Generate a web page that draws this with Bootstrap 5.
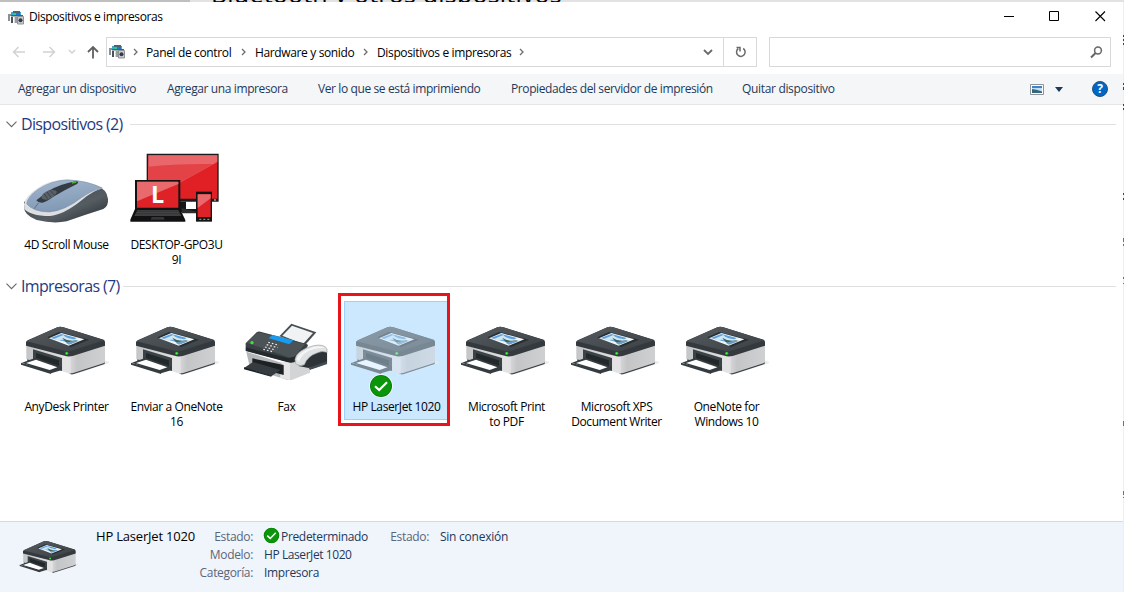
<!DOCTYPE html>
<html lang="es">
<head>
<meta charset="utf-8">
<title>Dispositivos e impresoras</title>
<meta name="viewport" content="width=device-width, initial-scale=1">
<link rel="stylesheet" href="https://cdn.jsdelivr.net/npm/bootstrap@5.3.0/dist/css/bootstrap.min.css">
<style>
html,body{height:100%}
body{font:12px/15px "Open Sans","Noto Sans",sans-serif;letter-spacing:-.39px;color:#000;background:#fff;overflow:hidden}
svg{display:block;flex:none}
.behind{height:2px;background:#e2e2e2;overflow:hidden}
.behind-tab{width:190px;height:2px;background:#bfbfbf}
.behind-text{font-size:25px;line-height:30px;margin:-22px 0 0 21px;letter-spacing:.2px;white-space:nowrap}
.titlebar{height:35px;padding-left:8px}
.win-btn{width:45.5px;height:29px}
.address{height:37px}
.field{height:30px;border:1px solid #d9d9d9}
.crumbs{width:618px;padding-left:2px;white-space:nowrap;letter-spacing:-.36px}
.refresh{width:34px;margin-left:-1px}
.search{width:342px;margin-left:12px}
.cmdbar{height:31px;background:#f5f6f7;border-bottom:1px solid #e4e6e8;color:#1e395b}
.cmdbar span{position:relative;white-space:nowrap;padding-bottom:1px}
.cmdbar .cmd{padding-left:18px}
.group-head{height:20px;font-size:16px;line-height:20px;color:#1f3a82;padding:0 8px 0 6px;letter-spacing:-.65px}
.group-head span{padding-bottom:1px}
.group-head hr{margin:0 0 0 7px;border-top:1px solid #e0e0e0;opacity:1}
.tiles{padding-left:11px}
.tile{width:110px;height:119px;text-align:center;white-space:nowrap;padding-left:1px}
.pic{height:98px;margin-left:-1px}
.pr{margin:23px 0 0 9px}
.chosen{background:#cce8ff;border:1px solid #99d1ff;width:104px;margin:0 3px;height:119px}
.chosen .pic{height:97px}
.chosen .pr{margin:22px 0 0 5px;opacity:.55}
.check-badge{left:24px;top:72px}
.frame{left:-7px;top:-9px;width:112px;height:133px;border:3px solid #e8141c}
.details{height:71px;background:#f0f4fb;border-top:1px solid #cfdbe6;color:#1e395b;line-height:18px;letter-spacing:-.33px}
.details .lbl{color:#5a6779;text-align:right;width:58px;margin-right:11px}
.model{font-size:13px;width:99px;margin:5px 0 0 17px;letter-spacing:-.2px}
.edge{width:1px;background:#eceef1}
</style>
</head>
<body class="d-flex flex-column position-relative">
<svg width="0" height="0" class="position-absolute">
<defs>
<linearGradient id="lid" x2="1" y2="1"><stop stop-color="#555b5f"/><stop offset="1" stop-color="#3a4044"/></linearGradient>
<linearGradient id="front" x2="1" y2="0"><stop stop-color="#c4c5c8"/><stop offset=".7" stop-color="#d8d9da"/><stop offset="1" stop-color="#e6e6e7"/></linearGradient>
<linearGradient id="side" x2="1" y2="0"><stop stop-color="#dcdcdd"/><stop offset=".25" stop-color="#c4c5c7"/><stop offset="1" stop-color="#cfd0d1"/></linearGradient>
<linearGradient id="blue" x2=".3" y2="1"><stop stop-color="#a3b7cf"/><stop offset="1" stop-color="#8199b5"/></linearGradient>
<linearGradient id="dark" x2="1" y2="1"><stop stop-color="#3d4449"/><stop offset=".6" stop-color="#555d63"/><stop offset="1" stop-color="#22282c"/></linearGradient>
<symbol id="printer" viewBox="30 42 270 162">
<path d="M190 194L296 160Q302 154 284 152Z" fill="#ececec"/>
<path d="M52 140L176 188Q182 196 192 192L284 162V155H52Z" fill="#3a4146"/>
<path d="M49 99L176 130V189L49 147Z" fill="url(#front)"/>
<path d="M174 129L285 99V153Q285 158 280 160L192 188Q180 192 174 187Z" fill="url(#side)"/>
<path d="M159 130H182V191Q170 190 159 184Z" fill="#e3e3e4"/>
<path d="M69 118L156 144V183L69 151Z" fill="#3c4347"/>
<path d="M78 129L147 151V170L78 146Z" fill="#23282b"/>
<path d="M36 158L77 143L156 171V180L123 190Z" fill="#353c40"/>
<path d="M48 159L78 149L142 172L119 180Z" fill="#fff"/>
<path d="M33 158L124 184L123 192L33 164Z" fill="#353c40"/>
<path d="M48 97Q48 94 53 91L142 52Q150 49 160 52L281 89Q285 91 285 97V107L188 138Q175 141 164 137L48 107Z" fill="#33393d"/>
<path d="M50 94L142 52Q150 49 160 52L283 91L184 122Q174 125 163 122Z" fill="url(#lid)"/>
<path d="M112 82L147 66L237 89L183 111Z" fill="#292e31"/>
<path d="M117 85L154 69L223 88L176 107Z" fill="#eef4f8"/>
<path d="M122 84L154 72L200 84L178 98Z" fill="#5c9fde"/>
<path d="M133 86L160 75Q167 86 211 91L194 98Q177 98 160 90Q153 87 145 92Z" fill="#cfe6f3"/>
<path d="M157 83Q177 97 204 90L182 101Q167 101 157 83Z" fill="#3f655c"/>
<path d="M167 98L191 92L205 94L177 104Z" fill="#6d9cc4"/>
<circle cx="170" cy="130" r="5" fill="#28b52b"/><circle cx="170" cy="130" r="2.5" fill="#5cf05e"/>
</symbol>
<symbol id="mouse" viewBox="60 105 270 150">
<path d="M72 200Q72 225 110 240Q160 252 200 244Q250 226 310 207Q326 199 324 177Q321 147 290 139L72 185Z" fill="url(#dark)"/>
<path d="M72 193Q76 168 110 146Q150 119 200 118Q260 120 309 145Q280 151 245 181Q190 225 150 228Q88 227 73 206Z" fill="#dcdfe2"/>
<path d="M80 191Q84 169 115 148Q153 122 202 120Q262 122 307 144Q275 150 244 173Q196 211 148 216Q98 215 80 191Z" fill="url(#blue)" stroke="#7388a0" stroke-width="1.5"/>
<path d="M103 206L116 188" stroke="#4d5966" stroke-width="2"/>
<path d="M109 181L145 153Q184 131 228 124Q239 125 231 132Q192 151 160 170Q140 185 127 188Q114 188 109 181Z" fill="#343b42"/>
<path d="M124 173Q126 159 147 151Q167 148 171 156Q165 169 146 178Q131 182 124 173Z" fill="#596168"/>
<path d="M132 161L143 176M141 156L153 172M151 152L163 165" stroke="#2a3035" stroke-width="2"/>
<path d="M216 129L229 126" stroke="#42b23b" stroke-width="4"/>
</symbol>
<symbol id="desktop" viewBox="387 36 276 216">
<path d="M440 41H656V185H440Z" fill="#1c1c1e"/><path d="M445 46H652V176H445Z" fill="#e12025"/><path d="M445 46H652V66L500 150H445Z" fill="#e9676b"/><path d="M445 80Q530 70 640 72L500 150H445Z" fill="#e34347"/>
<path d="M530 185H558V207H590V216H530Z" fill="#161617"/>
<path d="M545 205L593 216V220H545Z" fill="#2e2e30"/>
<path d="M405 120H541V209H405Z" fill="#121213"/><path d="M411 125H535V203H411Z" fill="#df2227"/><path d="M411 125H535V132L411 184Z" fill="#e86a6d"/>
<path d="M405 207H540L556 240V245H391V239Z" fill="#111"/><path d="M412 211H535L544 228H403Z" fill="#4c4c4f"/><path d="M410 215H538M407 220H541M405 225H543" stroke="#1a1a1b" stroke-width="1.5"/><path d="M455 231H491L494 239H452Z" fill="#353538"/>
<path d="M588 155H636V245H588Z" fill="#141415"/><path d="M593 163H632V231H593Z" fill="#df2227"/><path d="M593 163H632V175L593 204Z" fill="#e9686b"/>
<path d="M598 238H604M610 238H616M622 238H628" stroke="#aaa" stroke-width="3"/><path d="M642 180H648" stroke="#ddd" stroke-width="3"/>
<text x="453" y="190" font-family="Open Sans" font-weight="700" font-size="70" fill="#fff">L</text>
</symbol>
<symbol id="fax" viewBox="36 96 264 180">
<path d="M49 185L173 224V270L60 235Z" fill="#b3b7ba"/>
<path d="M173 218L239 205L292 185V222L240 248L185 270H173Z" fill="#d2d4d5"/>
<path d="M155 215H180V270L150 263Z" fill="#e6e6e6"/>
<path d="M226 205L268 180L291 187V221L236 234L205 228Z" fill="#2d3337"/>
<path d="M236 233L291 214V224L240 240Z" fill="#444b50"/>
<path d="M240 240L292 222V240L240 262Z" fill="#fff"/>
<path d="M67 205L161 225V255L67 230Z" fill="#1c2124"/>
<path d="M42 234L69 216L151 240L124 259Z" fill="#353b3f"/><path d="M42 232L124 257V260L42 238Z" fill="#1d2225"/>
<path d="M148 139L184 101L259 127L225 166Z" fill="#474d50"/><path d="M157 137L186 107L249 129L219 162Z" fill="#f1f2f3"/>
<path d="M47 160L80 127Q84 124 91 125L228 161Q237 164 232 170L198 211Q193 219 174 216L53 183Q46 180 47 160Z" fill="#394044"/>
<path d="M50 158L80 130Q84 127 91 128L225 163L195 197Q188 205 173 201Z" fill="#4c5357"/>
<path d="M47 172L176 205L199 199V213Q190 220 174 217L47 183Z" fill="#24292d"/>
<path d="M116 145L127 135L190 151L178 163Z" fill="#189bf0"/>
<path d="M115 157L147 166M110 164L143 173M105 171L137 180M100 178L131 186" stroke="#f0f0f0" stroke-width="3.5" stroke-dasharray="5 6"/>
<circle cx="66" cy="158" r="5" fill="#45df3a"/>
<path d="M195 208Q200 180 251 167Q281 161 291 176V187Q278 181 263 188Q232 198 223 224Q209 231 197 221Z" fill="#dfe1e2" stroke="#a0a5a8" stroke-width="2"/>
<path d="M200 208Q207 184 250 171Q275 166 284 174Q252 173 231 186Q213 196 207 216Z" fill="#f5f5f5"/>
</symbol>
<symbol id="ok" viewBox="0 0 24 24"><circle cx="12" cy="12" r="11.7" fill="#fff"/><circle cx="12" cy="12" r="11" fill="#087c08"/><circle cx="12" cy="12" r="10.2" fill="#0b950a"/><path d="M6 12.2L10.2 16.1L18 8.2" fill="none" stroke="#fff" stroke-width="2.1"/></symbol>
<symbol id="app" viewBox="0 0 16 14">
<path d="M0 3H5V5H2V10H0Z" fill="#8a9197"/><path d="M3 1H13V4H3Z" fill="#38a7d8"/><path d="M5 0H12V2H5Z" fill="#4d6370"/><path d="M5 2H8V4H5Z" fill="#2fc79a"/><path d="M8 2H12V4H8Z" fill="#1678d2"/><path d="M3 4H15V5.500H3Z" fill="#545c63"/><path d="M3 6H5V12H3Z" fill="#4a5258"/><path d="M6 6H9V12H6Z" fill="#d7dadc"/><path d="M7.500 6H8.500V12H7.500Z" fill="#575f65"/><path d="M9.500 5.500H15.500V13H9.500Z" fill="#c9ccce" stroke="#8d9397"/><circle cx="12.500" cy="9.300" r="2" fill="#353b40"/>
</symbol>
<symbol id="sep" viewBox="0 0 6 8"><path d="M1 1L4 4L1 7" fill="none" stroke="#6d6d6d" stroke-width="1.3"/></symbol>
<symbol id="fold" viewBox="0 0 11 7"><path d="M.5 .7L5.5 5.7L10.5 .7" fill="none" stroke="#666" stroke-width="1.1"/></symbol>
</defs>
</svg>

<div class="behind d-flex"><div class="behind-tab"></div><div class="behind-text">Bluetooth y otros dispositivos</div></div>

<header class="titlebar d-flex align-items-start">
  <svg width="16" height="14" style="margin-top:9px"><use href="#app"/></svg>
  <span style="margin:7px 0 0 5px">Dispositivos e impresoras</span>
  <div class="d-flex ms-auto" style="margin-right:1px">
    <div class="win-btn d-flex align-items-center justify-content-center"><svg width="11" height="11"><path d="M0 5.5H10" stroke="#000"/></svg></div>
    <div class="win-btn d-flex align-items-center justify-content-center"><svg width="11" height="11"><path d="M.5 .5H9.500V9.500H.5Z" fill="none" stroke="#000"/></svg></div>
    <div class="win-btn d-flex align-items-center justify-content-center"><svg width="11" height="11"><path d="M.5 .5L10 10M10 .5L.5 10" stroke="#000" stroke-width="1.1"/></svg></div>
  </div>
</header>

<nav class="address d-flex align-items-start">
  <svg width="106" height="30"><g fill="none" stroke="#d2d2d2" stroke-width="1.5"><path d="M25 15H14M18.5 10L13.5 15L18.5 20M43 15H54M49.500 10L54.500 15L49.500 20"/><path d="M69 13L72 16L75 13"/></g><path d="M93 21.500V10M88 15L93 10L98 15" fill="none" stroke="#606060" stroke-width="1.8"/></svg>
  <div class="field crumbs d-flex align-items-center">
    <svg width="16" height="14"><use href="#app"/></svg>
    <svg width="6" height="8" style="margin:0 7px 0 8px"><use href="#sep"/></svg><span style="width:86px">Panel de control</span>
    <svg width="6" height="8" style="margin:0 8px 0 9px"><use href="#sep"/></svg><span style="width:99px">Hardware y sonido</span>
    <svg width="6" height="8" style="margin:0 8px 0 9px"><use href="#sep"/></svg><span style="width:133px">Dispositivos e impresoras</span>
    <svg width="6" height="8" style="margin-left:9px"><use href="#sep"/></svg>
    <svg class="ms-auto" width="10" height="7" style="margin-right:10px"><path d="M1 1L5 5L9 1" fill="none" stroke="#6a6a6a" stroke-width="1.8"/></svg>
  </div>
  <div class="field refresh d-flex align-items-center justify-content-center"><svg width="12" height="12" style="margin-left:2px"><path d="M8.200 2.500A4.300 4.300 0 1 1 3.200 2.700M1.500 1.500H5V5.500" fill="none" stroke="#6a6a6a" stroke-width="1.5"/></svg></div>
  <div class="field search d-flex align-items-center justify-content-end"><svg width="13" height="13" style="margin-right:7px"><circle cx="8" cy="4.500" r="3.400" fill="none" stroke="#666" stroke-width="1.5"/><path d="M5.600 7L1 11.500" stroke="#666" stroke-width="2"/></svg></div>
</nav>

<div class="cmdbar d-flex align-items-center">
  <span class="cmd" style="width:167px;letter-spacing:-.3px">Agregar un dispositivo</span><span style="width:151px">Agregar una impresora</span><span style="width:193px">Ver lo que se está imprimiendo</span><span style="width:231px">Propiedades del servidor de impresión</span><span style="letter-spacing:-.33px">Quitar dispositivo</span>
  <svg class="ms-auto" width="14" height="11"><path d="M.5 .5H13.500V10.500H.5Z" fill="#fff" stroke="#8e9398"/><path d="M2 2H12V9H2Z" fill="#bfe0f5"/><path d="M2 2H12V4H2Z" fill="#3f83c6"/><path d="M2 5Q6 5 12 7.500V9H2Z" fill="#35677c"/></svg>
  <svg width="8" height="5" style="margin-left:11px"><path d="M0 0H8L4 5Z" fill="#1e395b"/></svg>
  <svg width="16" height="16" viewBox="0 0 16 16" style="margin:0 16px 0 29px"><circle cx="8" cy="8" r="7.500" fill="#0067c5" stroke="#24517d"/><text x="8" y="12.300" text-anchor="middle" font-family="Open Sans" font-weight="700" font-size="12" fill="#fff">?</text></svg>
</div>

<main class="flex-grow-1">
  <div class="group-head d-flex align-items-center" style="margin-top:9px"><svg width="11" height="7" style="margin-right:4px"><use href="#fold"/></svg><span style="width:102px" class="text-nowrap">Dispositivos (2)</span><hr class="flex-grow-1"></div>
  <div class="tiles d-flex" style="margin-top:5px">
    <div class="tile"><div class="pic d-flex align-items-start"><svg width="90" height="50" style="margin:36px 0 0 9px"><use href="#mouse"/></svg></div>4D Scroll Mouse</div>
    <div class="tile"><div class="pic d-flex align-items-start"><svg width="92" height="72" style="margin:13px 0 0 8px"><use href="#desktop"/></svg></div>DESKTOP-GPO3U<br>9I</div>
  </div>
  <div class="group-head d-flex align-items-center" style="margin-top:18px"><svg width="11" height="7" style="margin-right:4px"><use href="#fold"/></svg><span style="width:95px" class="text-nowrap">Impresoras (7)</span><hr class="flex-grow-1"></div>
  <div class="tiles d-flex" style="margin-top:5px">
    <div class="tile"><div class="pic d-flex align-items-start"><svg class="pr" width="90" height="54"><use href="#printer"/></svg></div>AnyDesk Printer</div>
    <div class="tile"><div class="pic d-flex align-items-start"><svg class="pr" width="90" height="54"><use href="#printer"/></svg></div>Enviar a OneNote<br>16</div>
    <div class="tile"><div class="pic d-flex align-items-start"><svg width="88" height="60" style="margin:21px 0 0 11px"><use href="#fax"/></svg></div>Fax</div>
    <div class="tile chosen position-relative"><div class="pic d-flex align-items-start"><svg class="pr" width="90" height="54"><use href="#printer"/></svg></div>HP LaserJet 1020
      <svg class="check-badge position-absolute" width="24" height="24"><use href="#ok"/></svg>
      <div class="frame position-absolute"></div></div>
    <div class="tile"><div class="pic d-flex align-items-start"><svg class="pr" width="90" height="54"><use href="#printer"/></svg></div>Microsoft Print<br>to PDF</div>
    <div class="tile"><div class="pic d-flex align-items-start"><svg class="pr" width="90" height="54"><use href="#printer"/></svg></div>Microsoft XPS<br>Document Writer</div>
    <div class="tile"><div class="pic d-flex align-items-start"><svg class="pr" width="90" height="54"><use href="#printer"/></svg></div>OneNote for<br>Windows 10</div>
  </div>
</main>

<footer class="details d-flex align-items-start">
  <svg width="60" height="36" style="margin:17px 0 0 19px"><use href="#printer"/></svg>
  <div class="model text-black text-nowrap">HP LaserJet 1020</div>
  <div style="margin-top:6px">
    <div class="d-flex"><span class="lbl">Estado:</span><svg width="17" height="17" style="margin:-1px 1px 0 -1px"><use href="#ok"/></svg><span style="width:86px">Predeterminado</span><span class="lbl" style="width:62px">Estado:</span><span style="letter-spacing:-.25px">Sin conexión</span></div>
    <div class="d-flex"><span class="lbl">Modelo:</span><span style="letter-spacing:-.42px">HP LaserJet 1020</span></div>
    <div class="d-flex"><span class="lbl">Categoría:</span><span>Impresora</span></div>
  </div>
</footer>

<div class="edge position-absolute end-0 bottom-0" style="top:2px"><svg width="1" height="590"><path d="M.5 33V35M.5 37V39M.5 41V43M.5 81V83M.5 85V88M.5 102V104M.5 106V108M.5 191V193M.5 196V198" stroke="#444"/><path d="M.5 236V240M.5 242V244M.5 275V277M.5 281V282M.5 419V424M.5 489V493M.5 495V496" stroke="#248dab"/></svg></div>
<script src="https://cdn.jsdelivr.net/npm/bootstrap@5.3.0/dist/js/bootstrap.bundle.min.js"></script>
</body>
</html>
